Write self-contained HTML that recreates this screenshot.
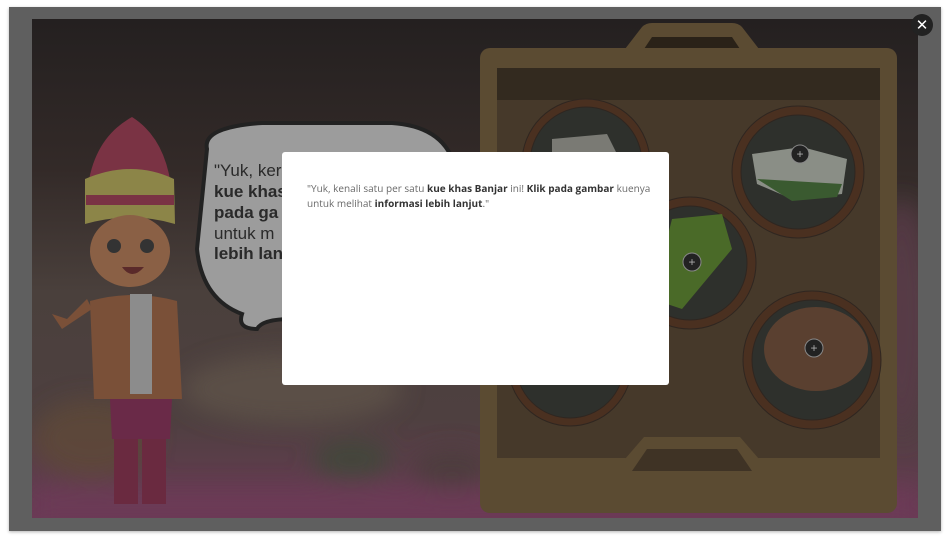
<!DOCTYPE html><html><head><meta charset="utf-8"><style>
html,body{margin:0;padding:0;background:#fff;width:950px;height:543px;overflow:hidden;font-family:"Open Sans","Liberation Sans",sans-serif}
.frame{position:absolute;left:9px;top:7px;width:932px;height:524px;background:#5f5f5f;box-shadow:0 1px 3px rgba(0,0,0,.3)}
svg.scene{position:absolute;left:32px;top:19px}
.modal{position:absolute;left:282px;top:152px;width:387px;height:233px;background:#fff;border-radius:3px}
.modal p{margin:0;position:absolute;left:25px;top:29px;width:345px;font-size:10px;line-height:15px;color:#6a6a6a}
.modal b{color:#333}
.close{position:absolute;left:911px;top:14px;width:22px;height:22px;border-radius:50%;background:#222;color:#fff;font-size:15px;line-height:22px;text-align:center;font-family:"DejaVu Sans",sans-serif}
</style></head><body>
<div class="frame"></div>
<svg class="scene" width="886" height="499" viewBox="0 0 886 499">
<defs><linearGradient id="bg" x1="0" y1="0" x2="0" y2="1"><stop offset="0" stop-color="#242020"/><stop offset=".3" stop-color="#332a28"/><stop offset=".55" stop-color="#4a403c"/><stop offset=".8" stop-color="#4e4040"/><stop offset="1" stop-color="#6a3a55"/></linearGradient>
<filter id="bl"><feGaussianBlur stdDeviation="12"/></filter></defs>
<rect width="886" height="499" fill="url(#bg)"/>
<g filter="url(#bl)" opacity=".8">
<ellipse cx="260" cy="370" rx="110" ry="35" fill="#5e5248"/>
<ellipse cx="60" cy="420" rx="60" ry="40" fill="#5e4a38"/>
<ellipse cx="320" cy="440" rx="40" ry="20" fill="#3e4a38"/>
<ellipse cx="420" cy="450" rx="40" ry="20" fill="#4a3e3a"/>
<ellipse cx="870" cy="300" rx="30" ry="120" fill="#5a3a48"/>
<rect x="0" y="470" width="886" height="30" fill="#6e3a58"/>
</g>
<!-- speech bubble -->
<path d="M175 130 Q170 108 230 104 L360 104 Q420 108 425 160 L425 260 Q415 300 260 300 Q230 300 225 310 Q205 310 210 295 Q170 280 165 230 Z" fill="#9c9c9c" stroke="#222" stroke-width="4"/>
<g font-family="Liberation Sans,sans-serif" font-size="17" fill="#2a2a2a"><text x="182" y="157">"Yuk, ker</text><text x="182" y="178" font-weight="bold">kue khas</text><text x="182" y="199" font-weight="bold">pada ga</text><text x="182" y="220">untuk m</text><text x="182" y="240" font-weight="bold">lebih lan</text></g>
<!-- character -->
<path d="M55 175 Q60 120 100 98 Q135 120 140 175 Z" fill="#7a3344"/>
<path d="M53 160 Q100 140 142 160 L143 205 Q100 192 53 205Z" fill="#8c8548"/>
<rect x="54" y="176" width="88" height="10" fill="#7a3344"/>
<ellipse cx="98" cy="232" rx="40" ry="36" fill="#8a6045"/>
<circle cx="82" cy="227" r="7" fill="#333"/><circle cx="115" cy="227" r="7" fill="#333"/>
<path d="M90 248 Q100 262 112 248Z" fill="#5a2a2a"/>
<path d="M58 282 Q100 270 145 282 L150 380 L62 380Z" fill="#7a5038"/>
<rect x="98" y="275" width="22" height="100" fill="#8c8c8c"/>
<path d="M78 380 L140 380 L138 420 L80 420Z" fill="#6a2a48"/>
<rect x="82" y="420" width="24" height="65" fill="#6a2a40"/><rect x="110" y="420" width="24" height="65" fill="#6a2a40"/>
<path d="M60 290 L30 310 L20 295 L35 300 L55 280Z" fill="#7a5038"/>
<!-- tray -->
<path d="M593 30 L610 8 Q614 4 620 4 L700 4 Q706 4 710 8 L727 30Z" fill="#5b4b32"/>
<path d="M612 30 L620 18 L700 18 L708 30Z" fill="#2a2218"/>
<rect x="448" y="29" width="417" height="465" rx="10" fill="#5b4b32"/>
<rect x="465" y="49" width="383" height="390" fill="#46392a"/>
<rect x="465" y="49" width="383" height="32" fill="#332a1f"/>
<path d="M593 440 L612 418 L708 418 L727 440Z" fill="#5b4b32"/>
<path d="M600 452 L615 430 L705 430 L720 452Z" fill="#3f3325"/>
<g stroke="#2f2620" stroke-width="1">
<circle cx="554" cy="144" r="64" fill="#4a3020"/><circle cx="554" cy="144" r="56" fill="#2e302c"/>
<circle cx="766" cy="153" r="66" fill="#4a3020"/><circle cx="766" cy="153" r="57" fill="#2e302c"/>
<circle cx="658" cy="244" r="66" fill="#4a3020"/><circle cx="658" cy="244" r="57" fill="#2e302c"/>
<circle cx="780" cy="341" r="69" fill="#4a3020"/><circle cx="780" cy="341" r="60" fill="#2e302c"/>
<circle cx="538" cy="345" r="62" fill="#4a3020"/><circle cx="538" cy="345" r="54" fill="#2e302c"/>
</g>
<path d="M720 135 L770 128 L815 140 L810 175 L760 180 L725 165Z" fill="#8a8e86"/>
<path d="M725 160 L810 165 L805 178 L760 182Z" fill="#3a5a30"/>
<path d="M640 200 L690 195 L700 230 L650 290 L620 280Z" fill="#4a6a28"/>
<ellipse cx="784" cy="330" rx="52" ry="42" fill="#5a4030"/>
<path d="M520 120 L575 115 L585 135 L520 140Z" fill="#7a7a74"/>
<g fill="#222" stroke="#888" stroke-width="1"><circle cx="768" cy="135" r="9"/><circle cx="660" cy="243" r="9"/><circle cx="782" cy="329" r="9"/></g>
<g fill="#aaa" font-size="12" text-anchor="middle" font-family="Liberation Sans"><text x="768" y="139">+</text><text x="660" y="247">+</text><text x="782" y="333">+</text></g>
</svg>
<div class="modal"><p>"Yuk, kenali satu per satu <b>kue khas Banjar</b> ini! <b>Klik pada gambar</b> kuenya untuk melihat <b>informasi lebih lanjut</b>."</p></div>
<div class="close">✕</div>
</body></html>
